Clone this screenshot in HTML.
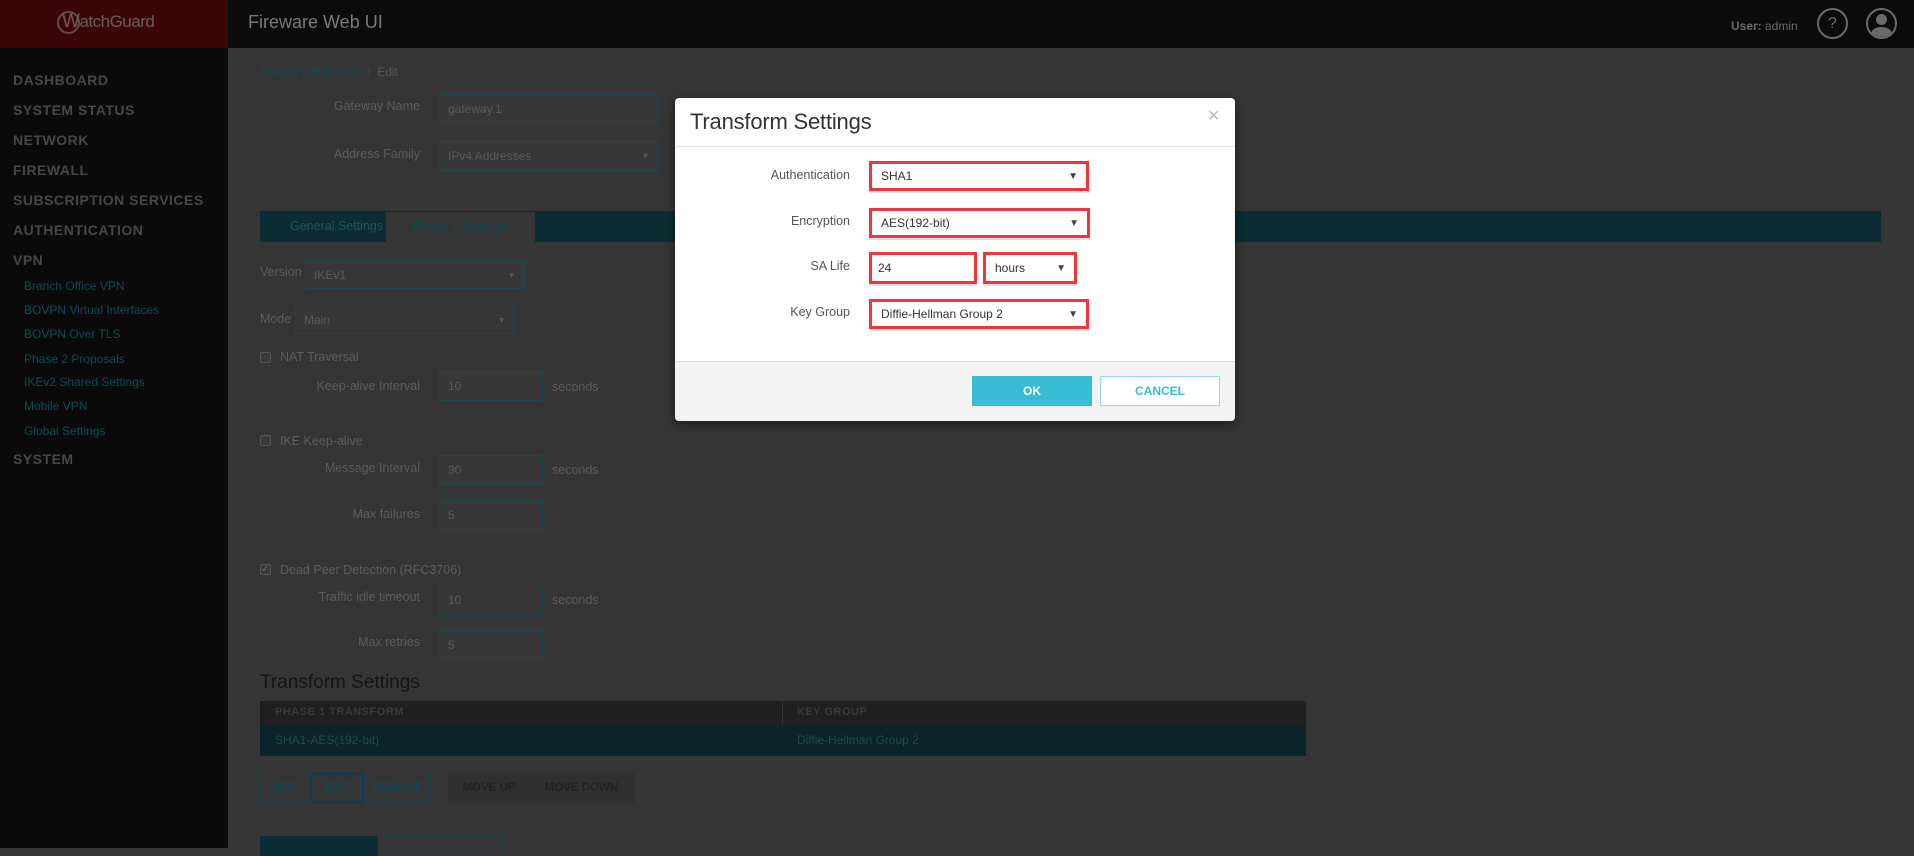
<!DOCTYPE html>
<html><head><meta charset="utf-8"><style>
*{margin:0;padding:0;box-sizing:border-box}
body{width:1914px;height:848px;overflow:hidden;background:#353535;font-family:"Liberation Sans",sans-serif;position:relative}
.a{position:absolute;white-space:nowrap}
.sb{font-weight:bold;color:#474747;font-size:14px;letter-spacing:.5px;left:13px}
.ss{color:#0f4a55;font-size:12px;left:24px}
.lb{color:#5c5c5c;font-size:12.5px;text-align:right}
.in{background:#373737;border:1px solid #21454c;color:#5a5a5a;font-size:12px;padding-left:8px;display:flex;align-items:center}
.ar{position:absolute;right:8px;font-size:9px;color:#555}
.cb{width:11px;height:11px;border:1px solid #555;border-radius:2px;background:#3a3a3a}
.bt{border:1px solid #1d4148;color:#0f4a55;font-weight:bold;font-size:11.5px;display:flex;align-items:center;justify-content:center;height:30px;top:773px}
.ml{color:#555;font-size:12.5px;right:1064px;text-align:right}
.rs{border:3px solid #f0363a;background:#fff;color:#333;font-size:12px;display:flex;align-items:center;padding-left:9px;box-shadow:0 2px 0 #cfe3ea}
.rs .ar{color:#444;font-size:10px}
</style></head><body>
<div class="a" style="left:0;top:0;width:1914px;height:48px;background:#0b0b0b"></div>
<div class="a" style="left:0;top:0;width:228px;height:48px;background:#3a0606"></div>
<div class="a" style="left:57px;top:11px;width:23px;height:23px;border:2px solid #6a4a4a;border-radius:50%"></div>
<div class="a" style="left:62px;top:11px;font-size:19px;color:#6e5a5a;letter-spacing:-.5px">W<span style="font-size:17px">atchGuard</span></div>
<div class="a" style="left:248px;top:12px;font-size:18px;color:#7a7a7a">Fireware Web UI</div>
<div class="a" style="left:1731px;top:19px;font-size:12px;color:#6a6a6a"><b>User:</b> admin</div>
<div class="a" style="left:1817px;top:8px;width:31px;height:31px;border:2px solid #6a6a6a;border-radius:50%;color:#6a6a6a;font-size:16px;text-align:center;line-height:27px">?</div>
<div class="a" style="left:1866px;top:8px;width:31px;height:31px;border:2px solid #6a6a6a;border-radius:50%;overflow:hidden"><div style="position:absolute;left:8px;top:4px;width:11px;height:11px;border-radius:50%;background:#6a6a6a"></div><div style="position:absolute;left:3px;top:17px;width:21px;height:14px;border-radius:50% 50% 0 0;background:#6a6a6a"></div></div>
<div class="a" style="left:0;top:48px;width:228px;height:800px;background:#0a0a0a"></div>
<div class="a sb" style="top:72px">DASHBOARD</div>
<div class="a sb" style="top:102px">SYSTEM STATUS</div>
<div class="a sb" style="top:132px">NETWORK</div>
<div class="a sb" style="top:162px">FIREWALL</div>
<div class="a sb" style="top:192px">SUBSCRIPTION SERVICES</div>
<div class="a sb" style="top:222px">AUTHENTICATION</div>
<div class="a sb" style="top:252px">VPN</div>
<div class="a ss" style="top:279px">Branch Office VPN</div>
<div class="a ss" style="top:303px">BOVPN Virtual Interfaces</div>
<div class="a ss" style="top:327px">BOVPN Over TLS</div>
<div class="a ss" style="top:352px">Phase 2 Proposals</div>
<div class="a ss" style="top:375px">IKEv2 Shared Settings</div>
<div class="a ss" style="top:399px">Mobile VPN</div>
<div class="a ss" style="top:424px">Global Settings</div>
<div class="a sb" style="top:451px">SYSTEM</div>

<div class="a" style="left:260px;top:65px;font-size:12px;color:#0f4a55">Branch Office VPN <span style="color:#444">&nbsp;/&nbsp;</span> <span style="color:#5a5a5a">Edit</span></div>
<div class="a lb" style="left:300px;width:120px;top:99px">Gateway Name</div>
<div class="a in" style="left:439px;top:94px;width:220px;height:30px">gateway.1</div>
<div class="a lb" style="left:300px;width:120px;top:147px">Address Family</div>
<div class="a in" style="left:439px;top:141px;width:220px;height:30px">IPv4 Addresses<span class="ar">▼</span></div>
<div class="a" style="left:260px;top:211px;width:1621px;height:31px;background:#0b2c33"></div>
<div class="a" style="left:290px;top:219px;font-size:12.5px;color:#1d5560">General Settings</div>
<div class="a" style="left:386px;top:212px;width:149px;height:30px;background:#353535;color:#0f4a55;font-size:12.5px;text-align:center;line-height:30px">Phase 1 Settings</div>
<div class="a lb" style="left:260px;top:265px">Version</div>
<div class="a in" style="left:305px;top:260px;width:220px;height:29px">IKEv1<span class="ar">▼</span></div>
<div class="a lb" style="left:260px;top:312px">Mode</div>
<div class="a in" style="left:295px;top:305px;width:220px;height:29px">Main<span class="ar">▼</span></div>
<div class="a cb" style="left:260px;top:352px"></div>
<div class="a lb" style="left:280px;top:350px">NAT Traversal</div>
<div class="a lb" style="left:280px;width:140px;top:379px">Keep-alive Interval</div>
<div class="a in" style="left:439px;top:371px;width:104px;height:30px">10</div>
<div class="a lb" style="left:552px;top:380px">seconds</div>
<div class="a cb" style="left:260px;top:435px"></div>
<div class="a lb" style="left:280px;top:434px">IKE Keep-alive</div>
<div class="a lb" style="left:280px;width:140px;top:461px">Message Interval</div>
<div class="a in" style="left:439px;top:455px;width:104px;height:30px">30</div>
<div class="a lb" style="left:552px;top:463px">seconds</div>
<div class="a lb" style="left:280px;width:140px;top:507px">Max failures</div>
<div class="a in" style="left:439px;top:500px;width:104px;height:30px">5</div>
<div class="a cb" style="left:260px;top:564px;font-size:10px;color:#666;line-height:9px">✓</div>
<div class="a lb" style="left:280px;top:563px">Dead Peer Detection (RFC3706)</div>
<div class="a lb" style="left:280px;width:140px;top:590px">Traffic idle timeout</div>
<div class="a in" style="left:439px;top:585px;width:104px;height:30px">10</div>
<div class="a lb" style="left:552px;top:593px">seconds</div>
<div class="a lb" style="left:280px;width:140px;top:635px">Max retries</div>
<div class="a in" style="left:439px;top:630px;width:104px;height:30px">5</div>
<div class="a" style="left:260px;top:672px;font-size:19px;color:#151515">Transform Settings</div>
<div class="a" style="left:260px;top:701px;width:1046px;height:24px;background:#1f1f1f"></div>
<div class="a" style="left:782px;top:701px;width:1px;height:24px;background:#333"></div>
<div class="a" style="left:275px;top:706px;font-size:11px;font-weight:bold;color:#3a3a3a;letter-spacing:.5px">PHASE 1 TRANSFORM</div>
<div class="a" style="left:797px;top:706px;font-size:11px;font-weight:bold;color:#3a3a3a;letter-spacing:.5px">KEY GROUP</div>
<div class="a" style="left:260px;top:725px;width:1046px;height:31px;background:#0b2329"></div>
<div class="a" style="left:275px;top:733px;font-size:12px;color:#1e4a52">SHA1-AES(192-bit)</div>
<div class="a" style="left:797px;top:733px;font-size:12px;color:#1e4a52">Diffie-Hellman Group 2</div>
<div class="a bt" style="left:260px;width:51px">ADD</div>
<div class="a bt" style="left:310px;width:54px;border:2px solid #103a55">EDIT</div>
<div class="a bt" style="left:364px;width:67px">REMOVE</div>
<div class="a bt" style="left:448px;width:82px;background:#303030;border-color:#2e2e2e;color:#222">MOVE UP</div>
<div class="a bt" style="left:529px;width:105px;background:#303030;border-color:#2e2e2e;color:#222">MOVE DOWN</div>
<div class="a" style="left:260px;top:836px;width:118px;height:20px;background:#0b2c33"></div>
<div class="a" style="left:383px;top:836px;width:120px;height:20px;border:1px solid #1d4148"></div>

<div class="a" style="left:675px;top:98px;width:560px;height:323px;background:#fff;border-radius:4px;overflow:hidden;box-shadow:0 3px 10px rgba(0,0,0,.5)">
<div class="a" style="left:15px;top:11px;font-size:22px;color:#333;letter-spacing:-.2px">Transform Settings</div>
<div class="a" style="left:532px;top:8px;font-size:16px;color:#bbb">✕</div>
<div class="a" style="left:0;top:48px;width:560px;height:1px;background:#e5e5e5"></div>
<div class="a" style="left:0;top:263px;width:560px;height:60px;background:#f3f3f3;border-top:1px solid #ddd"></div>
<div class="a" style="left:297px;top:278px;width:120px;height:30px;background:#38bcd6;color:#fff;font-weight:bold;font-size:12px;text-align:center;line-height:30px">OK</div>
<div class="a" style="left:425px;top:278px;width:120px;height:30px;background:#fff;border:1px solid #8fdbe8;color:#38bcd6;font-weight:bold;font-size:12px;text-align:center;line-height:28px">CANCEL</div>
</div>
<div class="a ml" style="top:168px">Authentication</div>
<div class="a ml" style="top:214px">Encryption</div>
<div class="a ml" style="top:259px">SA Life</div>
<div class="a ml" style="top:305px">Key Group</div>
<div class="a rs" style="left:869px;top:161px;width:220px;height:30px">SHA1<span class="ar">▼</span></div>
<div class="a rs" style="left:869px;top:208px;width:221px;height:30px">AES(192-bit)<span class="ar">▼</span></div>
<div class="a rs" style="left:869px;top:252px;width:108px;height:32px;padding-left:6px">24</div>
<div class="a rs" style="left:983px;top:252px;width:94px;height:32px">hours<span class="ar">▼</span></div>
<div class="a rs" style="left:869px;top:299px;width:220px;height:30px">Diffie-Hellman Group 2<span class="ar">▼</span></div>
</body></html>
